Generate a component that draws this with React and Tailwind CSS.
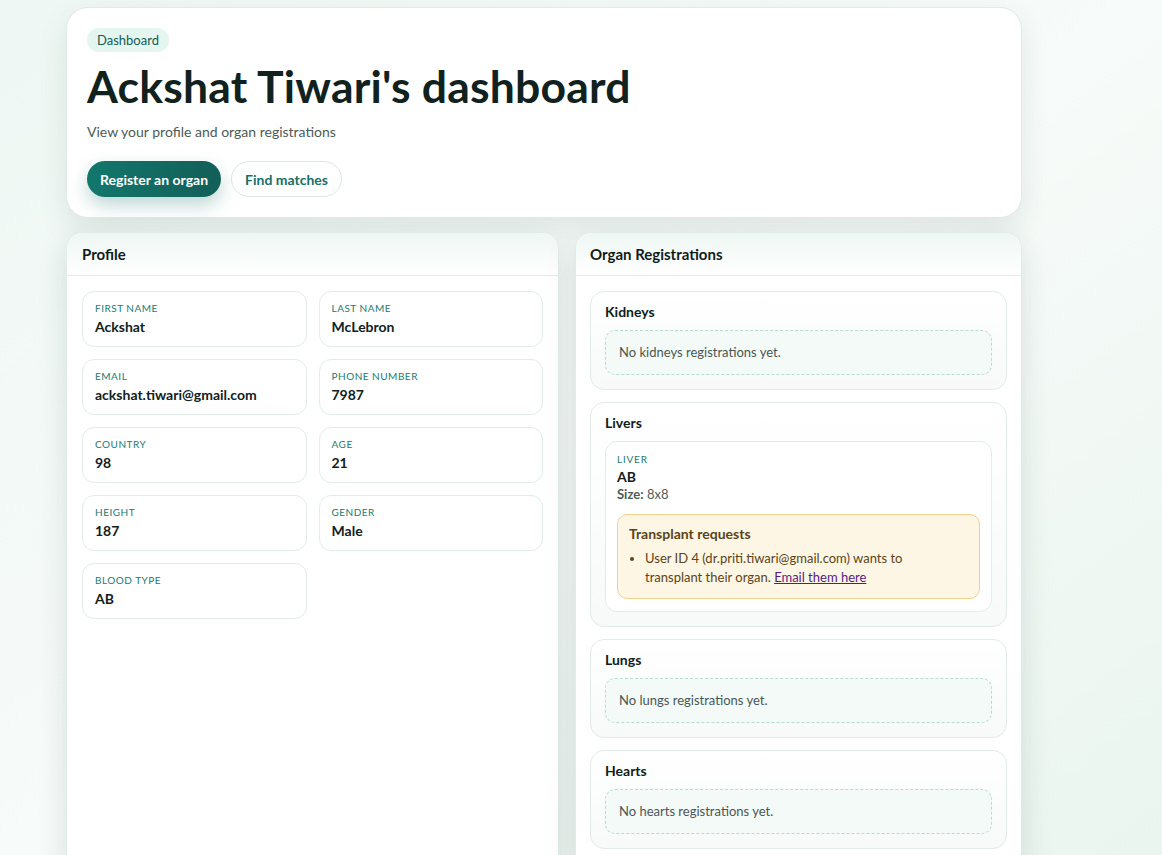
import React from "react";

const profile = [
  ["First name", "Ackshat"],
  ["Last name", "McLebron"],
  ["Email", "ackshat.tiwari@gmail.com"],
  ["Phone number", "7987"],
  ["Country", "98"],
  ["Age", "21"],
  ["Height", "187"],
  ["Gender", "Male"],
  ["Blood type", "AB"],
];

function Empty({ name }) {
  return (
    <div className="rounded-[10px] border border-dashed border-[#b7ddd0] bg-[#f3faf7] px-[13px] py-[12px] text-[13px] leading-[19px] text-[#4a5754]">
      No {name} registrations yet.
    </div>
  );
}

function OrganSection({ title, children }) {
  return (
    <div className="rounded-[14px] border border-[#e2ebe9] bg-gradient-to-b from-white to-[#f7faf9] px-[14px] pt-[11px] pb-[14px]">
      <h3 className="mb-[9px] text-[14px] leading-[18px] font-bold text-[#0f1d1a]">{title}</h3>
      {children}
    </div>
  );
}

export default function App() {
  return (
    <div
      className="min-h-screen bg-gradient-to-br from-[#eef7f3] via-[#f7fbf9] to-[#eaf5ef] pl-[66px] pt-[7px] text-[#10211d]"
      style={{ fontFamily: '"Trebuchet MS", "Lato", "DejaVu Sans", sans-serif' }}
    >
      <div className="w-[956px]">
        {/* Header card */}
        <header className="rounded-[22px] border border-[#e1ebe8] bg-white px-[20px] pt-[20px] pb-[20px] shadow-[0_12px_30px_rgba(16,60,50,0.1)]">
          <span className="block w-fit rounded-full bg-[#e4f6ef] px-[10px] py-[3px] text-[13px] leading-[18px] text-[#125c52]">
            Dashboard
          </span>
          <h1 className="mt-[10px] text-[44.5px] leading-[48px] font-bold tracking-[0.2px] text-[#11221e]">
            Ackshat Tiwari's dashboard
          </h1>
          <p className="mt-[12px] text-[14px] leading-[20px] text-[#4c5b57]">View your profile and organ registrations</p>
          <div className="mt-[19px] flex gap-[10px]">
            <button className="h-[36px] rounded-full bg-gradient-to-r from-[#13776c] to-[#125f58] px-[13px] text-[14px] font-bold text-white shadow-[0_8px_18px_rgba(18,110,100,0.28)]">
              Register an organ
            </button>
            <button className="h-[36px] rounded-full border border-[#dbe6e3] bg-white px-[13px] text-[14px] font-bold text-[#157066]">
              Find matches
            </button>
          </div>
        </header>

        <div className="mt-[14px] grid grid-cols-[493px_1fr] gap-[16px]">
          {/* Profile */}
          <section className="rounded-t-[16px] border border-[#e1ebe8] bg-white shadow-[0_10px_30px_rgba(20,50,45,0.13)]">
            <div className="flex h-[43px] items-center rounded-t-[16px] border-b border-[#e3ecea] bg-gradient-to-b from-[#eef7f4] to-white px-[15px]">
              <h2 className="text-[15px] font-bold text-[#0f1d1a]">Profile</h2>
            </div>
            <div className="grid grid-cols-2 gap-x-[12px] gap-y-[12px] px-[15px] pt-[15px]">
              {profile.map(([label, value]) => (
                <div key={label} className="h-[56px] rounded-[12px] border border-[#e3ecea] bg-white px-[12px] pt-[10px]">
                  <div className="text-[10px] leading-[12px] uppercase tracking-[0.5px] text-[#1b7a70]">{label}</div>
                  <div className="mt-[4px] text-[14px] leading-[18px] font-bold text-[#10211d]">{value}</div>
                </div>
              ))}
            </div>
          </section>

          {/* Organ registrations */}
          <section className="rounded-t-[16px] border border-[#e1ebe8] bg-white shadow-[0_10px_30px_rgba(20,50,45,0.13)]">
            <div className="flex h-[43px] items-center rounded-t-[16px] border-b border-[#e3ecea] bg-gradient-to-b from-[#eef7f4] to-white px-[14px]">
              <h2 className="text-[15px] font-bold text-[#0f1d1a]">Organ Registrations</h2>
            </div>
            <div className="flex flex-col gap-[12px] px-[14px] pt-[15px] pb-[15px]">
              <OrganSection title="Kidneys">
                <Empty name="kidneys" />
              </OrganSection>
              <OrganSection title="Livers">
                <div className="rounded-[12px] border border-[#e3ecea] bg-white px-[11px] pt-[11px] pb-[12px]">
                  <div className="text-[10px] leading-[12px] uppercase tracking-[0.8px] text-[#1b7a70]">Liver</div>
                  <div className="mt-[4px] text-[14px] leading-[16px] font-bold text-[#10211d]">AB</div>
                  <div className="text-[13px] leading-[18px] text-[#4c5b57]">
                    <span className="font-bold">Size:</span> 8x8
                  </div>
                  <div className="mt-[11px] rounded-[10px] border border-[#f2d28a] bg-[#fdf6e4] px-[11px] pt-[8px] pb-[11px] text-[#5b4419]">
                    <div className="text-[14px] leading-[21px] font-bold">Transplant requests</div>
                    <ul className="mt-[5px] list-disc pl-[16px] pr-[14px] text-[13px] leading-[19px]">
                      <li>
                        User ID 4 (dr.priti.tiwari@gmail.com) wants to transplant their organ.{" "}
                        <a href="#" className="text-[#551a8b] underline">Email them here</a>
                      </li>
                    </ul>
                  </div>
                </div>
              </OrganSection>
              <OrganSection title="Lungs">
                <Empty name="lungs" />
              </OrganSection>
              <OrganSection title="Hearts">
                <Empty name="hearts" />
              </OrganSection>
            </div>
          </section>
        </div>
      </div>
    </div>
  );
}
